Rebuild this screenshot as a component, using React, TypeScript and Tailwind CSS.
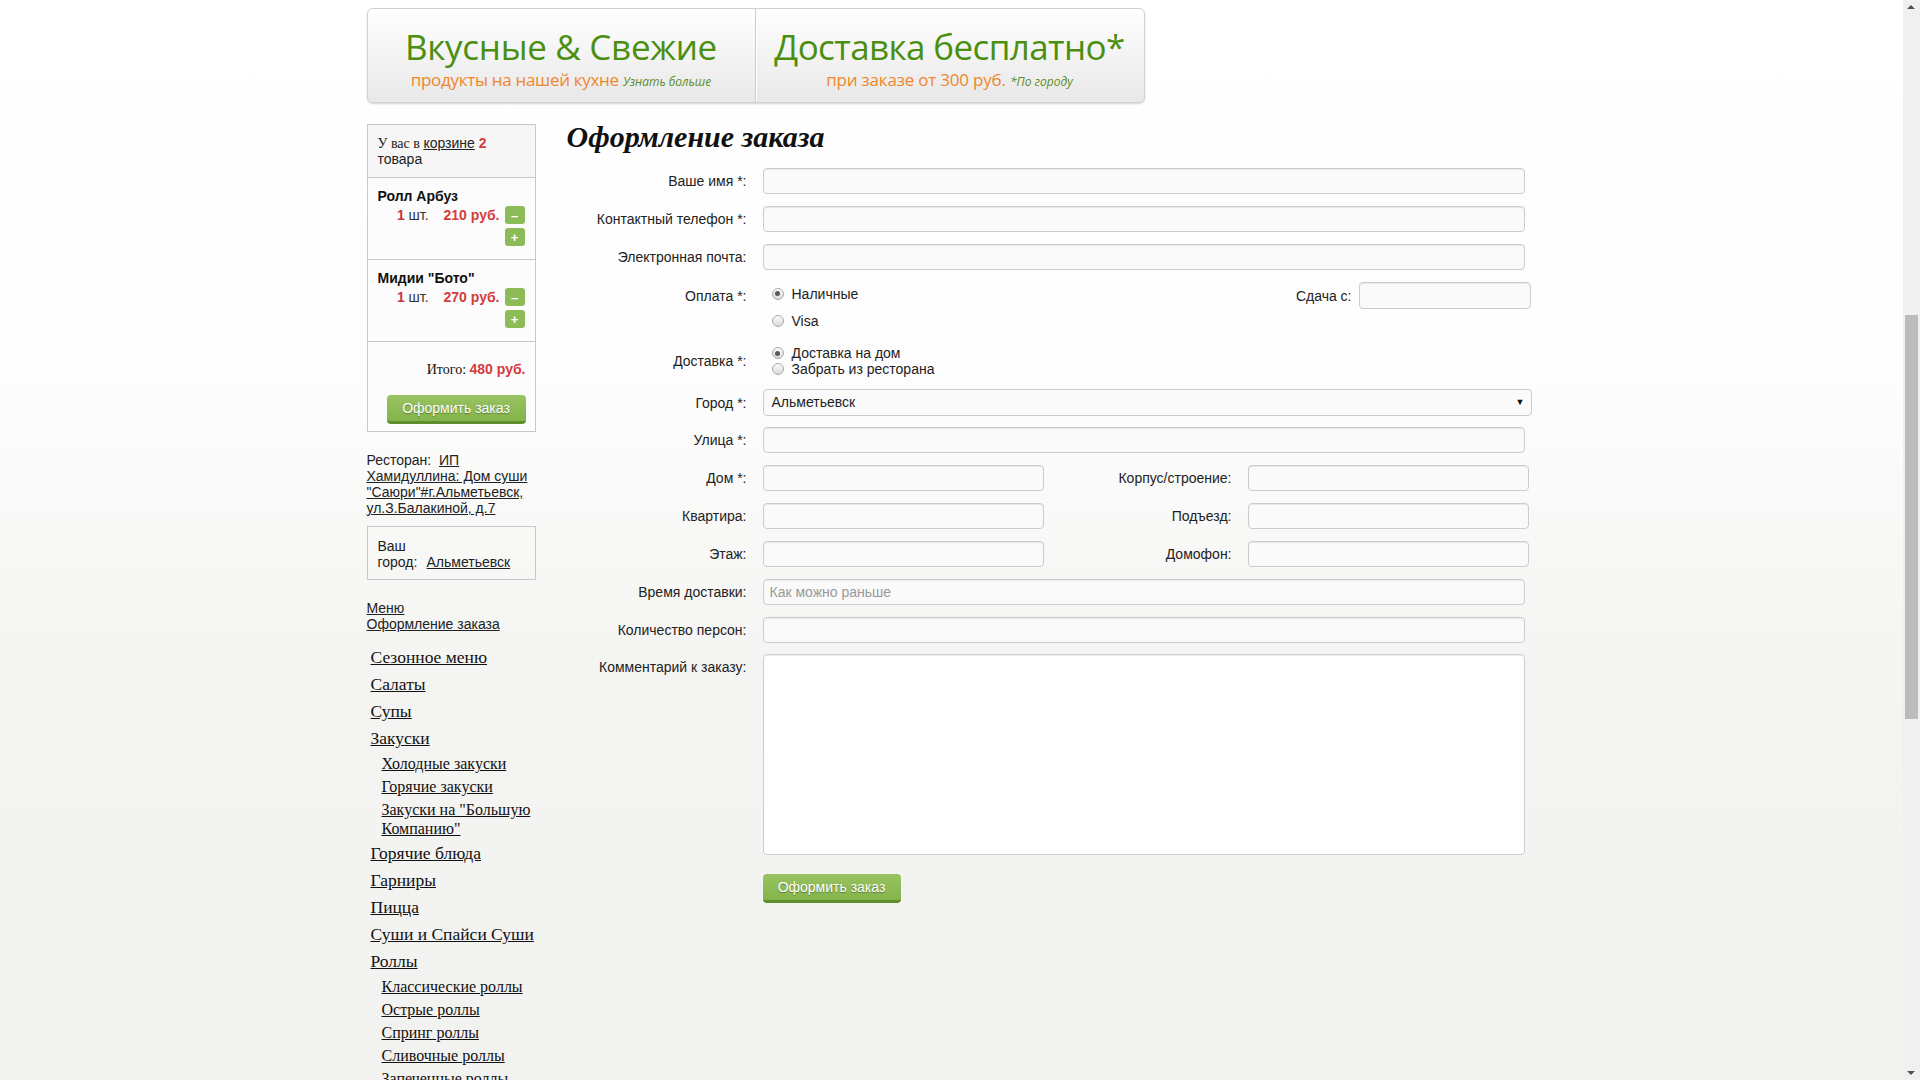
import React from "react";

const SANS = "font-['Liberation_Sans',Arial,sans-serif]";
const SERIF = "font-['Liberation_Serif','Times_New_Roman',serif]";
const OPEN = "font-['Open_Sans','Noto_Sans',sans-serif]";

const inputCls =
  "block h-[26px] rounded-[4px] border border-[#cccccc] bg-[#fafafa] shadow-[inset_0_1px_1px_rgba(0,0,0,0.075)] px-[6px] text-[14px] text-[#555] outline-none placeholder:text-[#999] font-['Liberation_Sans',Arial,sans-serif]";

const greenBtn =
  "flex items-center justify-center rounded-[4px] border-b-[3px] border-[#5e8f2c] bg-gradient-to-b from-[#98c361] to-[#84b44b] text-white text-[14px] [text-shadow:0_1px_1px_rgba(0,0,0,0.35)] font-['Liberation_Sans',Arial,sans-serif]";

function Radio({ checked }: { checked?: boolean }) {
  return (
    <span className="inline-flex h-[12px] w-[12px] shrink-0 items-center justify-center rounded-full border border-[#a9a9a9] bg-gradient-to-b from-[#fbfbfb] to-[#dadada]">
      {checked && <span className="h-[5px] w-[5px] rounded-full bg-[#5a5a5a]" />}
    </span>
  );
}

function Row({
  label,
  children,
  className = "",
  top = false,
}: {
  label?: string;
  children: React.ReactNode;
  className?: string;
  top?: boolean;
}) {
  return (
    <div className={"flex " + (top ? "items-start " : "items-center ") + className}>
      <div
        className={
          "w-[180px] shrink-0 text-right text-[14px] leading-[16px] text-[#222] " + (top ? "mt-[5px]" : "")
        }
      >
        {label}
      </div>
      <div className="ml-[16px]">{children}</div>
    </div>
  );
}

function CartItem({ name, price }: { name: string; price: string }) {
  return (
    <div className="border-t border-[#c8c8c8] bg-[#fcfcfc] pl-[10px] pr-[10px] pt-[10px] pb-[13px]">
      <div className="h-[16px] text-[14px] leading-[16px] font-bold text-[#111]">{name}</div>
      <div className="mt-[2px] flex items-center justify-end">
        <span className="text-[14px] leading-[16px]">
          <span className="font-bold text-[#c9373a]">1</span>
          <span className="text-[#333]"> шт.</span>
        </span>
        <span className="ml-[15px] text-[14px] leading-[16px] font-bold text-[#d23c3c]">{price}</span>
        <span className="ml-[5px] flex h-[18px] w-[20px] items-center justify-center rounded-[3px] bg-[#8dbb57] text-[13px] font-bold leading-none text-white">
          –
        </span>
      </div>
      <div className="mt-[4px] flex justify-end">
        <span className="flex h-[18px] w-[20px] items-center justify-center rounded-[3px] bg-[#8dbb57] text-[13px] font-bold leading-none text-white">
          +
        </span>
      </div>
    </div>
  );
}

const topMenu: (string | string[])[] = [
  "Сезонное меню",
  "Салаты",
  "Супы",
  "Закуски",
  ["Холодные закуски", "Горячие закуски", 'Закуски на "Большую Компанию"'],
  "Горячие блюда",
  "Гарниры",
  "Пицца",
  "Суши и Спайси Суши",
  "Роллы",
  ["Классические роллы", "Острые роллы", "Спринг роллы", "Сливочные роллы", "Запеченные роллы"],
];

export default function App() {
  return (
    <div className={"flex h-[1080px] w-[1920px] overflow-hidden " + SANS}>
      <div className="h-[1080px] w-[1903px] overflow-hidden bg-[linear-gradient(to_bottom,#ffffff_0%,#fdfdfd_35%,#f4f4f2_62%,#f2f2f0_100%)]">
        <div className="mx-auto w-[1170px] pt-[8px]">
          {/* Header banner */}
          <div className="flex h-[95px] w-[778px] rounded-[6px] border border-[#d2d2d2] bg-gradient-to-b from-[#ffffff] to-[#e8e8e8] shadow-[0_1px_2px_rgba(0,0,0,0.18)]">
            <div className={"w-[387px] pt-[16px] text-center " + OPEN}>
              <div className="text-[35px] leading-[44px] tracking-[-0.3px] text-[#4b8f10]">Вкусные &amp; Свежие</div>
              <div className="text-[17px] leading-[22px] tracking-[-0.3px] text-[#f0862c]">
                продукты на нашей кухне{" "}
                <span className="text-[12px] italic tracking-normal text-[#5b8c2a]">Узнать больше</span>
              </div>
            </div>
            <div className="w-px bg-[#cccccc] shadow-[1px_0_0_#ffffff]" />
            <div className={"flex-1 pt-[16px] text-center " + OPEN}>
              <div className="text-[35px] leading-[44px] tracking-[-0.6px] text-[#4b8f10]">Доставка бесплатно*</div>
              <div className="text-[17px] leading-[22px] tracking-[-0.2px] text-[#f0862c]">
                при заказе от 300 руб.{" "}
                <span className="text-[12px] italic tracking-normal text-[#5b8c2a]">*По городу</span>
              </div>
            </div>
          </div>

          <div className="flex">
            {/* Left column */}
            <div className="w-[169px] shrink-0 pt-[21px]">
              <div className="border border-[#c8c8c8]">
                <div className="bg-[#f6f6f6] px-[10px] pt-[10px] pb-[10px] text-[14px] text-[#222]">
                  <div className="h-[16px] whitespace-nowrap leading-[16px]">
                    <span className={SERIF}>У вас в </span>
                    <span className="underline">корзине</span>{" "}
                    <span className="font-bold text-[#d23c3c]">2</span>
                  </div>
                  <div className="h-[16px] leading-[16px]">товара</div>
                </div>
                <CartItem name="Ролл Арбуз" price="210 руб." />
                <CartItem name='Мидии "Бото"' price="270 руб." />
                <div className="border-t border-[#c8c8c8] bg-[#fcfcfc] pr-[9px] pt-[19px] pb-[7px]">
                  <div className="h-[16px] text-right text-[14px] leading-[16px]">
                    <span className={SERIF + " text-[#111]"}>Итого: </span>
                    <span className="font-bold text-[#d23c3c]">480 руб.</span>
                  </div>
                  <div className="mt-[18px] flex justify-end">
                    <div className={greenBtn + " h-[29px] w-[139px]"}>Оформить заказ</div>
                  </div>
                </div>
              </div>

              <div className="mt-[20px] text-[14px] leading-[16px] text-[#222]">
                Ресторан:&nbsp;{" "}
                <span className="underline">
                  ИП Хамидуллина: Дом суши "Саюри"#г.Альметьевск, ул.З.Балакиной, д.7
                </span>
              </div>

              <div className="mt-[10px] flex items-end border border-[#c8c8c8] pl-[10px] pt-[11px] pb-[9px] text-[14px] leading-[16px] text-[#222]">
                <div className="w-[42px]">Ваш город:</div>
                <div className="ml-[7px] underline">Альметьевск</div>
              </div>

              <div className="mt-[20px] text-[14px] leading-[16px] text-[#222]">
                <div className="underline">Меню</div>
                <div className="underline">Оформление заказа</div>
              </div>

              <div className={"mt-[12px] text-[#111] " + SERIF}>
                {topMenu.map((m, i) =>
                  typeof m === "string" ? (
                    <div key={i} className="pl-[4px] text-[17.5px] leading-[27px]">
                      <span className="underline">{m}</span>
                    </div>
                  ) : (
                    <div key={i} className="pl-[15px]">
                      {m.map((s) => (
                        <div key={s} className="py-[2px] text-[16px] leading-[19px]">
                          <span className="underline">{s}</span>
                        </div>
                      ))}
                    </div>
                  )
                )}
              </div>
            </div>

            {/* Main */}
            <div className="ml-[31px] pt-[19px]">
              <div className={"text-[30px] leading-[30px] font-bold italic text-[#111] " + SERIF}>
                Оформление заказа
              </div>

              <div className="mt-[16px]">
                <Row label="Ваше имя *:">
                  <input className={inputCls + " w-[762px]"} />
                </Row>
                <Row label="Контактный телефон *:" className="mt-[12px]">
                  <input className={inputCls + " w-[762px]"} />
                </Row>
                <Row label="Электронная почта:" className="mt-[12px]">
                  <input className={inputCls + " w-[762px]"} />
                </Row>
                <Row label="Оплата *:" className="mt-[12px]">
                  <div className="flex h-[27px] w-[768px] items-center">
                    <div className="mb-[4px] ml-[9px] flex items-center">
                      <Radio checked />
                      <span className="ml-[8px] text-[14px] leading-[16px] text-[#222]">Наличные</span>
                    </div>
                    <div className="flex-1" />
                    <span className="text-[14px] leading-[16px] text-[#222]">Сдача с:</span>
                    <input className={inputCls + " ml-[7px] h-[27px] w-[172px]"} />
                  </div>
                </Row>
                <Row label="" className="mt-[5px]">
                  <div className="ml-[9px] flex h-[14px] items-center">
                    <Radio />
                    <span className="ml-[8px] text-[14px] leading-[16px] text-[#222]">Visa</span>
                  </div>
                </Row>
                <Row label="Доставка *:" className="mt-[17px]">
                  <div className="ml-[9px] text-[14px] leading-[16px] text-[#222]">
                    <div className="flex items-center">
                      <Radio checked />
                      <span className="ml-[8px]">Доставка на дом</span>
                    </div>
                    <div className="flex items-center">
                      <Radio />
                      <span className="ml-[8px]">Забрать из ресторана</span>
                    </div>
                  </div>
                </Row>
                <Row label="Город *:" className="mt-[12px]">
                  <div className="flex h-[27px] w-[769px] items-center justify-between rounded-[4px] border border-[#cccccc] bg-[#fafafa] pl-[8px] pr-[6px] text-[14px] text-[#222]">
                    <span>Альметьевск</span>
                    <span className="text-[9px] text-[#111]">▼</span>
                  </div>
                </Row>
                <Row label="Улица *:" className="mt-[11px]">
                  <input className={inputCls + " w-[762px]"} />
                </Row>
                {[
                  ["Дом *:", "Корпус/строение:"],
                  ["Квартира:", "Подъезд:"],
                  ["Этаж:", "Домофон:"],
                ].map(([a, b]) => (
                  <Row key={a} label={a} className="mt-[12px]">
                    <div className="flex items-center">
                      <input className={inputCls + " w-[281px]"} />
                      <div className="w-[188px] text-right text-[14px] leading-[16px] text-[#222]">{b}</div>
                      <input className={inputCls + " ml-[16px] w-[281px]"} />
                    </div>
                  </Row>
                ))}
                <Row label="Время доставки:" className="mt-[12px]">
                  <input className={inputCls + " w-[762px]"} placeholder="Как можно раньше" />
                </Row>
                <Row label="Количество персон:" className="mt-[12px]">
                  <input className={inputCls + " w-[762px]"} />
                </Row>
                <Row label="Комментарий к заказу:" className="mt-[11px]" top>
                  <textarea className="block h-[201px] w-[762px] resize-none rounded-[4px] border border-[#cccccc] bg-white shadow-[inset_0_1px_1px_rgba(0,0,0,0.075)] outline-none" />
                </Row>
                <div className="ml-[196px] mt-[19px]">
                  <div className={greenBtn + " h-[29px] w-[138px]"}>Оформить заказ</div>
                </div>
              </div>
            </div>
          </div>
        </div>
      </div>

      {/* Scrollbar */}
      <div className="relative h-[1080px] w-[17px] bg-[#f0f0f0]">
        <div className="absolute left-[4px] top-[5px] h-0 w-0 border-x-[4px] border-b-[4px] border-x-transparent border-b-[#505050]" />
        <div className="absolute left-[2px] top-[315px] h-[404px] w-[13px] bg-[#bcbcbc]" />
        <div className="absolute bottom-[5px] left-[4px] h-0 w-0 border-x-[4px] border-t-[4px] border-x-transparent border-t-[#505050]" />
      </div>
    </div>
  );
}
